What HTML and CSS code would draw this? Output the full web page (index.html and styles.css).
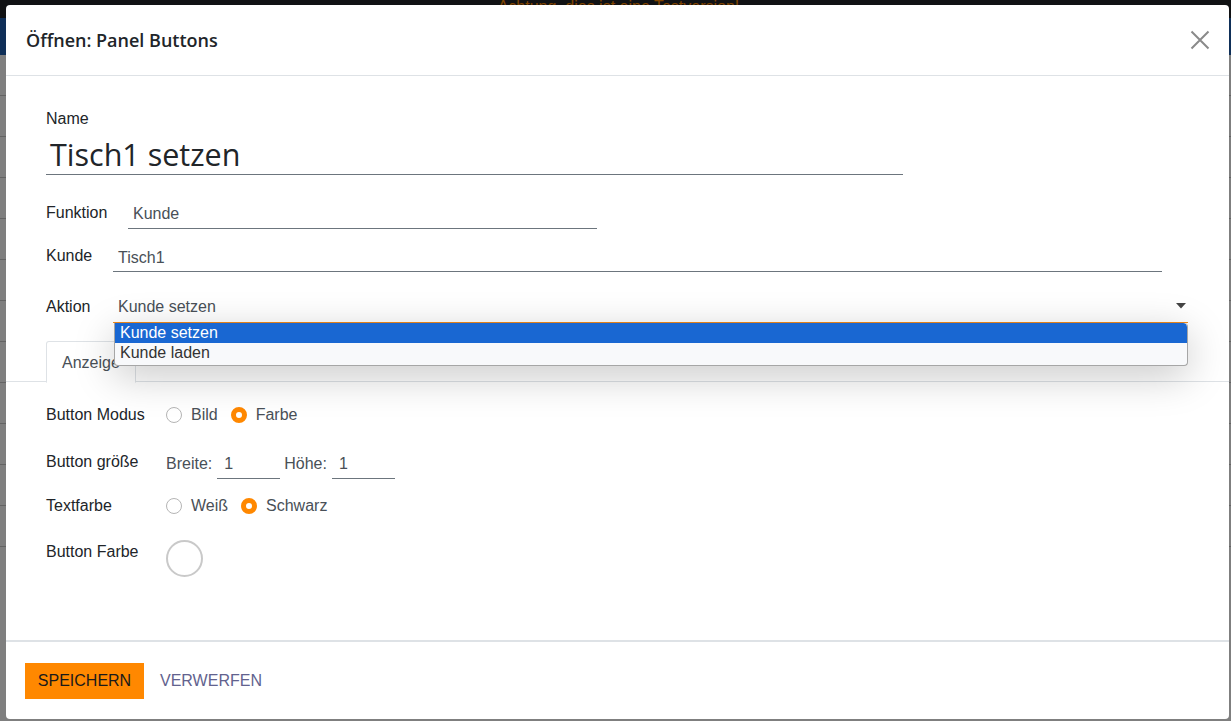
FILE: index.html
```html
<!DOCTYPE html>
<html lang="de">
<head>
<meta charset="utf-8">
<title>Öffnen: Panel Buttons</title>
<link rel="stylesheet" href="styles.css">
</head>
<body>
<div class="page">
  <div class="topbar">Achtung, dies ist eine Testversion!</div>
  <div class="navbar"></div>
  <div class="pagecontent">
    <div class="bgrow"></div><div class="bgrow"></div><div class="bgrow"></div><div class="bgrow"></div>
    <div class="bgrow"></div><div class="bgrow"></div><div class="bgrow"></div><div class="bgrow"></div>
    <div class="bgrow"></div><div class="bgrow"></div><div class="bgrow"></div><div class="bgrow"></div>
  </div>
  <div class="overlay"></div>
</div>

<div class="modal">
  <div class="modal-header">
    <h5 class="modal-title">Öffnen: Panel Buttons</h5>
    <svg class="close" width="20" height="20" viewBox="0 0 20 20"><path d="M1.5 1.5 L18.5 18.5 M18.5 1.5 L1.5 18.5" stroke="#8a8a8a" stroke-width="2" fill="none"/></svg>
  </div>
  <div class="modal-body">
    <div class="top-fields">
      <div class="lbl name-lbl">Name</div>
      <div class="name-input">Tisch1 setzen</div>
      <div class="row row-funktion">
        <div class="lbl lbl-funktion">Funktion</div>
        <div class="field field-funktion">Kunde</div>
      </div>
      <div class="row row-kunde">
        <div class="lbl lbl-kunde">Kunde</div>
        <div class="field field-kunde">Tisch1</div>
      </div>
      <div class="row row-aktion">
        <div class="lbl lbl-kunde">Aktion</div>
        <div class="field field-select">
          <span>Kunde setzen</span>
          <svg class="caret" width="10" height="6" viewBox="0 0 10 6"><path d="M0 0 H10 L5 5.5 Z" fill="#444"/></svg>
          <div class="dropdown">
            <div class="opt opt-sel">Kunde setzen</div>
            <div class="opt">Kunde laden</div>
          </div>
        </div>
      </div>
    </div>
    <div class="tabs">
      <div class="tab">Anzeige</div>
    </div>
    <div class="panel">
      <div class="prow prow-modus">
        <div class="plbl">Button Modus</div>
        <div class="pctl">
          <span class="radio"></span><span class="rtext">Bild</span>
          <span class="radio on"></span><span class="rtext">Farbe</span>
        </div>
      </div>
      <div class="prow prow-size">
        <div class="plbl">Button größe</div>
        <div class="pctl">
          <span class="rtext-plain">Breite:</span><span class="small-input">1</span>
          <span class="rtext-plain">Höhe:</span><span class="small-input">1</span>
        </div>
      </div>
      <div class="prow prow-text">
        <div class="plbl">Textfarbe</div>
        <div class="pctl">
          <span class="radio"></span><span class="rtext">Weiß</span>
          <span class="radio on"></span><span class="rtext">Schwarz</span>
        </div>
      </div>
      <div class="prow prow-farbe">
        <div class="plbl">Button Farbe</div>
        <div class="pctl"><span class="swatch"></span></div>
      </div>
    </div>
  </div>
  <div class="modal-footer">
    <button class="btn-save">SPEICHERN</button>
    <button class="btn-discard">VERWERFEN</button>
  </div>
</div>
</body>
</html>
```

FILE: styles.css
```css
html, body {
  margin: 0;
  padding: 0;
  width: 1231px;
  height: 721px;
  overflow: hidden;
  font-family: "Liberation Sans", Arial, sans-serif;
}

.page {
  position: relative;
  width: 1231px;
  height: 721px;
  background: #ffffff;
}

.topbar {
  height: 18px;
  background: #222428;
  color: #ff8a00;
  font-size: 16px;
  line-height: 14px;
  text-align: center;
  padding-left: 6px;
}

.navbar {
  height: 37px;
  background: #1f5fb0;
}

.pagecontent {
  display: flex;
  flex-direction: column;
}

.bgrow {
  height: 40px;
  border-bottom: 1px solid #c8c8c8;
}

.overlay {
  position: absolute;
  inset: 0;
  background: rgba(0, 0, 0, 0.5);
}

.modal {
  position: absolute;
  left: 6px;
  top: 5px;
  width: 1223px;
  height: 714px;
  background: #ffffff;
  border-radius: 4px;
  display: flex;
  flex-direction: column;
  color: #212529;
}

.modal-header {
  height: 70px;
  border-bottom: 1px solid #dee2e6;
  display: flex;
  align-items: center;
  justify-content: space-between;
  padding: 0 19px 0 20px;
  flex-shrink: 0;
}

.modal-title {
  margin: 0;
  font-family: "Open Sans", "Noto Sans", sans-serif;
  font-size: 18px;
  font-weight: 600;
  color: #212529;
}

.close {
  display: block;
}

.modal-body {
  flex: 1;
  display: flex;
  flex-direction: column;
  border-bottom: 2px solid #dee2e6;
}

.top-fields {
  padding: 34px 0 0 40px;
  display: flex;
  flex-direction: column;
}

.lbl {
  font-size: 16px;
  line-height: 18px;
  color: #212529;
}

.name-input {
  width: 853px;
  height: 43px;
  padding-left: 4px;
  margin-top: 3px;
  border-bottom: 1px solid #6c757d;
  font-family: "Open Sans", "Noto Sans", sans-serif;
  font-size: 30.5px;
  line-height: 46px;
  color: #212529;
}

.row {
  display: flex;
  align-items: center;
}

.row-funktion { margin-top: 24px; }
.row-kunde { margin-top: 13px; }
.row-aktion { margin-top: 20px; }

.lbl-funktion { width: 82px; margin-top: -3px; }
.lbl-kunde { width: 67px; margin-top: -2px; }

.field {
  height: 29px;
  line-height: 29px;
  border-bottom: 1px solid #6c757d;
  font-size: 16px;
  color: #495057;
  padding-left: 5px;
  box-sizing: content-box;
}

.field-funktion { width: 464px; }
.field-kunde { width: 1044px; line-height: 31px; }

.field-select {
  position: relative;
  width: 1070px;
  height: 30px;
  line-height: 32px;
  border-bottom: 1px solid #f08a1c;
  display: flex;
  align-items: center;
  justify-content: space-between;
  padding-right: 0;
}

.caret {
  margin-right: 2px;
  margin-top: -3px;
}

.dropdown {
  position: absolute;
  left: 1px;
  top: 31px;
  width: 1072px;
  border: 1px solid #a6a6a6;
  border-top: none;
  border-radius: 0 4px 4px 4px;
  background: #f8f9fb;
  box-shadow: 0 10px 40px rgba(0, 0, 0, 0.22);
  z-index: 5;
  overflow: hidden;
}

.opt {
  height: 22px;
  line-height: 19px;
  padding-left: 5px;
  font-size: 16px;
  color: #333;
}

.opt-sel {
  background: #1967d2;
  color: #ffffff;
  height: 20px;
  line-height: 20px;
  border-radius: 0 4px 0 0;
}

.tabs {
  margin-top: 18px;
  height: 40px;
  border-bottom: 1px solid #dee2e6;
  padding-left: 40px;
  display: flex;
}

.tab {
  width: 73px;
  height: 40px;
  border: 1px solid #dee2e6;
  border-bottom: 1px solid #ffffff;
  border-radius: 3px 3px 0 0;
  padding-left: 15px;
  font-size: 16px;
  line-height: 42px;
  color: #495057;
  background: #fff;
}

.panel {
  padding: 21px 0 0 40px;
  display: grid;
  grid-template-columns: 120px 1fr;
}

.prow {
  display: contents;
}

.plbl {
  font-size: 16px;
  line-height: 24px;
  color: #212529;
}

.pctl {
  display: flex;
  align-items: center;
  font-size: 16px;
  color: #495057;
  height: 24px;
}

.prow-modus .plbl { margin-bottom: 20px; }
.prow-size .plbl { margin-top: 3px; }
.prow-size .pctl { height: 31px; margin-top: 1px; align-items: flex-start; }
.prow-text .plbl, .prow-text .pctl { margin-top: 15px; }
.prow-farbe .plbl { margin-top: 22px; }
.prow-farbe .pctl { margin-top: 21px; height: 38px; }

.radio {
  flex-shrink: 0;
  width: 14px;
  height: 14px;
  border: 1px solid #b5b5b5;
  border-radius: 50%;
  box-sizing: content-box;
  margin-right: 9px;
}

.radio.on {
  width: 6px;
  height: 6px;
  border: 5px solid #ff8800;
}

.rtext {
  margin-right: 13px;
}

.rtext-plain {
  line-height: 31px;
  margin-right: 5px;
}

.small-input {
  width: 56px;
  height: 30px;
  border-bottom: 1px solid #6c757d;
  padding-left: 7px;
  line-height: 31px;
  margin-right: 4px;
  color: #495057;
}

.swatch {
  width: 33px;
  height: 33px;
  border: 2px solid #c9c9c9;
  border-radius: 50%;
  display: block;
}

.modal-footer {
  height: 77px;
  display: flex;
  align-items: center;
  padding-left: 19px;
  gap: 4px;
  flex-shrink: 0;
}

.btn-save {
  width: 119px;
  height: 36px;
  border: none;
  background: #ff8800;
  color: #1a1a1a;
  font-family: "Liberation Sans", Arial, sans-serif;
  font-size: 16px;
  padding: 0;
  border-radius: 0;
}

.btn-discard {
  height: 36px;
  border: none;
  background: transparent;
  color: #62628e;
  font-family: "Liberation Sans", Arial, sans-serif;
  font-size: 16px;
  padding: 0 12px;
}
```
